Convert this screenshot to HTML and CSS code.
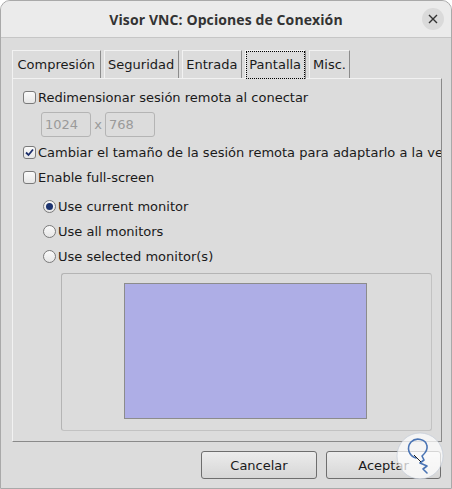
FILE: index.html
```html
<!DOCTYPE html>
<html lang="es">
<head>
<meta charset="utf-8">
<title>Visor VNC: Opciones de Conexión</title>
<link rel="stylesheet" href="styles.css">
</head>
<body>
<div class="window">
  <header class="titlebar">
    <span class="spacer"></span>
    <h1 class="title">Visor VNC: Opciones de Conexión</h1>
    <span class="close">
      <svg width="10" height="10" viewBox="0 0 10 10"><path d="M1 1L9 9M9 1L1 9" stroke="#333" stroke-width="1.4" fill="none"/></svg>
    </span>
  </header>
  <main class="content">
    <nav class="tabs">
      <div class="tab first">Compresión</div>
      <div class="tab">Seguridad</div>
      <div class="tab">Entrada</div>
      <div class="tab active"><span class="focus">Pantalla</span></div>
      <div class="tab">Misc.</div>
    </nav>
    <section class="panel">
      <div class="row check"><span class="box"></span>Redimensionar sesión remota al conectar</div>
      <div class="row size"><span class="field">1024</span><span class="times">x</span><span class="field">768</span></div>
      <div class="row check"><span class="box checked"><svg width="11" height="11" viewBox="0 0 11 11"><path d="M2 5.5L4.5 8L9 2.5" stroke="#1d2f6b" stroke-width="1.8" fill="none"/></svg></span>Cambiar el tamaño de la sesión remota para adaptarlo a la ve</div>
      <div class="row check"><span class="box"></span>Enable full-screen</div>
      <div class="radios">
        <div class="row radio"><span class="dot on"></span>Use current monitor</div>
        <div class="row radio"><span class="dot"></span>Use all monitors</div>
        <div class="row radio"><span class="dot"></span>Use selected monitor(s)</div>
      </div>
      <div class="monitors"><div class="screen"></div></div>
    </section>
    <footer class="buttons">
      <button class="btn cancel">Cancelar</button>
      <button class="btn ok">Aceptar</button>
    </footer>
  </main>
  <div class="watermark">
    <svg width="48" height="48" viewBox="0 0 48 48">
      <circle cx="24" cy="24" r="23" fill="rgba(255,255,255,0.72)" stroke="rgba(190,200,215,0.6)" stroke-width="1"/>
      <path d="M20 26C13 24 10 16 15 10C20 5 30 7 31 14C32 19 28 22 26 24L28 28L24 31L31 34L27 37L31 41" stroke="#4a74b4" stroke-width="1.6" fill="none" stroke-linecap="round" stroke-linejoin="round"/>
      <path d="M18 23L25 30" stroke="#222" stroke-width="1"/>
    </svg>
  </div>
</div>
</body>
</html>
```
FILE: styles.css
```css
html, body {
  margin: 0;
  padding: 0;
  background: #ffffff;
}

.window {
  position: relative;
  width: 452px;
  height: 489px;
  box-sizing: border-box;
  border: 1px solid #a9a9a9;
  border-radius: 10px 10px 0 0;
  background: #dcdcdc;
  overflow: hidden;
  display: flex;
  flex-direction: column;
  font-family: "DejaVu Sans", sans-serif;
  font-size: 13px;
  color: #1a1a1a;
}

.titlebar {
  height: 36px;
  flex: none;
  background: #ebebeb;
  border-bottom: 1px solid #c6c6c6;
  display: grid;
  grid-template-columns: 40px 1fr 40px;
  align-items: center;
}

.title {
  margin: 0;
  text-align: center;
  font-family: "Open Sans", sans-serif;
  font-weight: 700;
  font-size: 14px;
  color: #333333;
  letter-spacing: 0.1px;
}

.close {
  width: 22px;
  height: 22px;
  border-radius: 50%;
  background: #dadada;
  display: flex;
  align-items: center;
  justify-content: center;
  justify-self: end;
  margin-right: 7px;
}

.content {
  flex: 1;
  display: flex;
  flex-direction: column;
  padding: 11px 9px 0 11px;
}

.tabs {
  display: flex;
  gap: 3px;
  height: 29px;
  align-items: flex-end;
}

.tab {
  height: 28px;
  box-sizing: border-box;
  padding: 0 3.5px;
  display: flex;
  align-items: center;
  border-top: 1px solid #f2f2f2;
  border-left: 1px solid #f2f2f2;
  border-right: 1px solid #8c8c8c;
  background: #dcdcdc;
  white-space: nowrap;
}

.tab.first {
  padding: 0 4.5px;
}

.tab.active {
  height: 29px;
  padding: 0;
  margin-bottom: -1px;
  position: relative;
}

.focus {
  display: flex;
  align-items: center;
  height: 28px;
  box-sizing: border-box;
  padding: 0 2.5px 2px;
  border: 1px dotted #000;
}

.panel {
  height: 364px;
  box-sizing: border-box;
  border-top: 1px solid #f2f2f2;
  border-left: 1px solid #f2f2f2;
  border-right: 1px solid #8a8a8a;
  border-bottom: 1px solid #8a8a8a;
  padding: 6px 0 0 10px;
  overflow: hidden;
  display: flex;
  flex-direction: column;
}

.row {
  height: 25px;
  display: flex;
  align-items: center;
  white-space: nowrap;
}

.box {
  flex: none;
  width: 13px;
  height: 13px;
  box-sizing: border-box;
  border: 1px solid #7a7a7a;
  border-radius: 3px;
  background: linear-gradient(#fafafa, #e6e6e6);
  margin-right: 2px;
  display: flex;
  align-items: center;
  justify-content: center;
}

.size {
  padding-left: 18px;
  margin: 2px 0 3px;
  height: 25px;
}

.field {
  width: 50px;
  height: 25px;
  box-sizing: border-box;
  border: 1px solid #b4b4b4;
  border-radius: 3px;
  color: #9a9a9a;
  padding-left: 3px;
  display: flex;
  align-items: center;
}

.times {
  color: #9a9a9a;
  width: 14px;
  text-align: center;
}

.radios {
  display: flex;
  flex-direction: column;
  padding-left: 20px;
  margin-top: 4px;
}

.dot {
  flex: none;
  width: 13px;
  height: 13px;
  box-sizing: border-box;
  border: 1px solid #7a7a7a;
  border-radius: 50%;
  background: linear-gradient(#fafafa, #e6e6e6);
  margin-right: 2px;
  display: flex;
  align-items: center;
  justify-content: center;
}

.dot.on::after {
  content: "";
  width: 7px;
  height: 7px;
  border-radius: 50%;
  background: #1d3470;
}

.monitors {
  margin: 4px 9px 0 38px;
  height: 158px;
  box-sizing: border-box;
  border: 1px solid #c2c2c2;
  border-left-color: #b4b4b4;
  border-top-color: #b4b4b4;
  border-radius: 3px;
  display: flex;
  justify-content: center;
  padding: 9px 2px 0 0;
}

.screen {
  width: 243px;
  height: 136px;
  box-sizing: border-box;
  border: 1px solid #8c8c8c;
  background: #aeaee6;
}

.buttons {
  display: flex;
  justify-content: flex-end;
  gap: 9px;
  margin-top: 9px;
  padding-right: 1px;
}

.btn {
  height: 28px;
  box-sizing: border-box;
  border: 1px solid #6e6e6e;
  border-radius: 3px;
  background: linear-gradient(#ececec, #d6d6d6);
  font-family: "DejaVu Sans", sans-serif;
  font-size: 13px;
  color: #1a1a1a;
  padding: 0;
}

.cancel {
  width: 116px;
}

.ok {
  width: 115px;
}

.watermark {
  position: absolute;
  left: 395px;
  top: 431px;
  width: 48px;
  height: 48px;
}
```
